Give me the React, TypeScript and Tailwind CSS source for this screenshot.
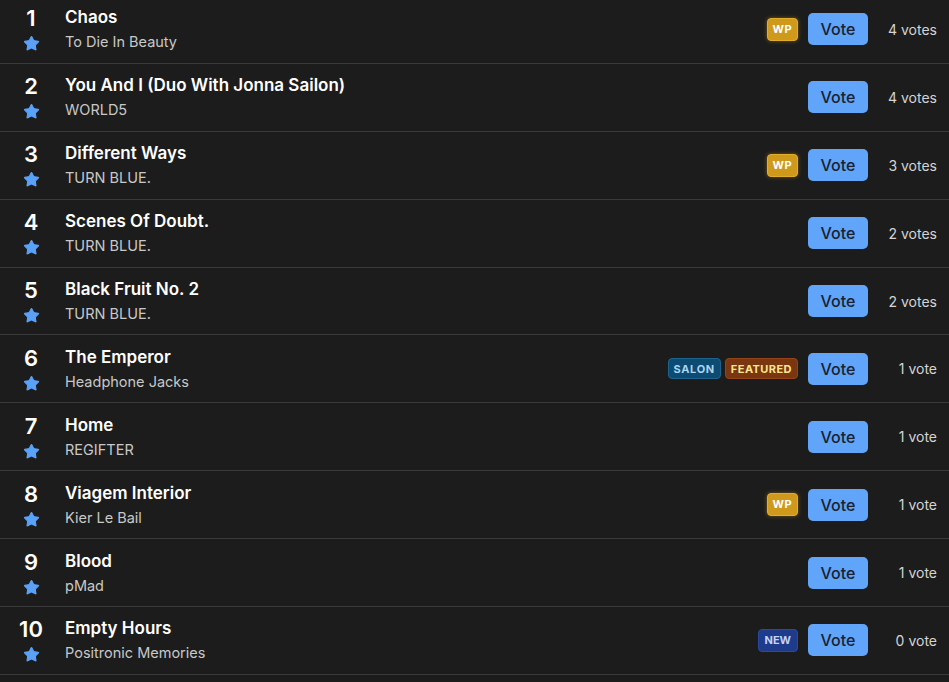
import { Star } from 'lucide-react';

type Badge = 'WP' | 'SALON' | 'FEATURED' | 'NEW';

interface Track {
  rank: number;
  title: string;
  artist: string;
  badges: Badge[];
  votes: number;
}

const tracks: Track[] = [
  { rank: 1, title: 'Chaos', artist: 'To Die In Beauty', badges: ['WP'], votes: 4 },
  { rank: 2, title: 'You And I (Duo With Jonna Sailon)', artist: 'WORLD5', badges: [], votes: 4 },
  { rank: 3, title: 'Different Ways', artist: 'TURN BLUE.', badges: ['WP'], votes: 3 },
  { rank: 4, title: 'Scenes Of Doubt.', artist: 'TURN BLUE.', badges: [], votes: 2 },
  { rank: 5, title: 'Black Fruit No. 2', artist: 'TURN BLUE.', badges: [], votes: 2 },
  { rank: 6, title: 'The Emperor', artist: 'Headphone Jacks', badges: ['SALON', 'FEATURED'], votes: 1 },
  { rank: 7, title: 'Home', artist: 'REGIFTER', badges: [], votes: 1 },
  { rank: 8, title: 'Viagem Interior', artist: 'Kier Le Bail', badges: ['WP'], votes: 1 },
  { rank: 9, title: 'Blood', artist: 'pMad', badges: [], votes: 1 },
  { rank: 10, title: 'Empty Hours', artist: 'Positronic Memories', badges: ['NEW'], votes: 0 },
];

const badgeStyles: Record<Badge, string> = {
  WP: 'h-[23px] px-[5px] bg-[#cf9a1c] border-[#e0ad2c] text-white shadow-[0_0_4px_rgba(222,165,40,0.45)] tracking-[0.04em]',
  SALON: 'h-[21px] px-[5px] bg-[#0e4b72] border-[#1b6490] text-[#a9d4f2] tracking-[0.06em]',
  FEATURED: 'h-[21px] px-[5px] bg-[#7a3511] border-[#934419] text-[#fde58f] tracking-[0.04em]',
  NEW: 'h-[23px] px-[6px] bg-[#1f3b8c] border-[#2a4aa0] text-[#c3d5f7]',
};

function TrackRow({ track }: { track: Track }) {
  return (
    <div className="flex h-[67.9px] items-center border-b border-[#3a3a3a] pr-3">
      <div className="ml-[11px] flex w-[40px] flex-col items-center">
        <span className="text-[22px] font-semibold leading-[24px] text-white">{track.rank}</span>
        <Star size={17} className="mt-[5px] fill-[#5aa2f8] text-[#5aa2f8]" strokeWidth={1.5} />
      </div>
      <div className="ml-[14px] flex min-w-0 flex-1 flex-col">
        <span className="text-[17px] font-semibold leading-[22px] text-white">{track.title}</span>
        <span className="mt-[4px] text-[14.5px] leading-[20px] text-[#c8c8c8]">{track.artist}</span>
      </div>
      <div className="flex items-center gap-1">
        {track.badges.map((b) => (
          <span
            key={b}
            className={`flex items-center rounded-[4px] border text-[11px] font-bold ${badgeStyles[b]}`}
          >
            {b}
          </span>
        ))}
      </div>
      <button className="ml-[10px] h-[32px] w-[60px] rounded-[5px] bg-[#60a5fa] text-[16px] font-medium text-[#1b2130]">
        Vote
      </button>
      <span className="w-[69px] text-right text-[14px] text-[#d4d4d4]">
        {track.votes} {track.votes > 1 ? 'votes' : 'vote'}
      </span>
    </div>
  );
}

export default function App() {
  return (
    <div
      className="h-[682px] w-full overflow-hidden bg-[#1c1c1c]"
      style={{ fontFamily: 'Inter, "Noto Sans", sans-serif' }}
    >
      <div className="-mt-[4px]">
        {tracks.map((t) => (
          <TrackRow key={t.rank} track={t} />
        ))}
      </div>
    </div>
  );
}
